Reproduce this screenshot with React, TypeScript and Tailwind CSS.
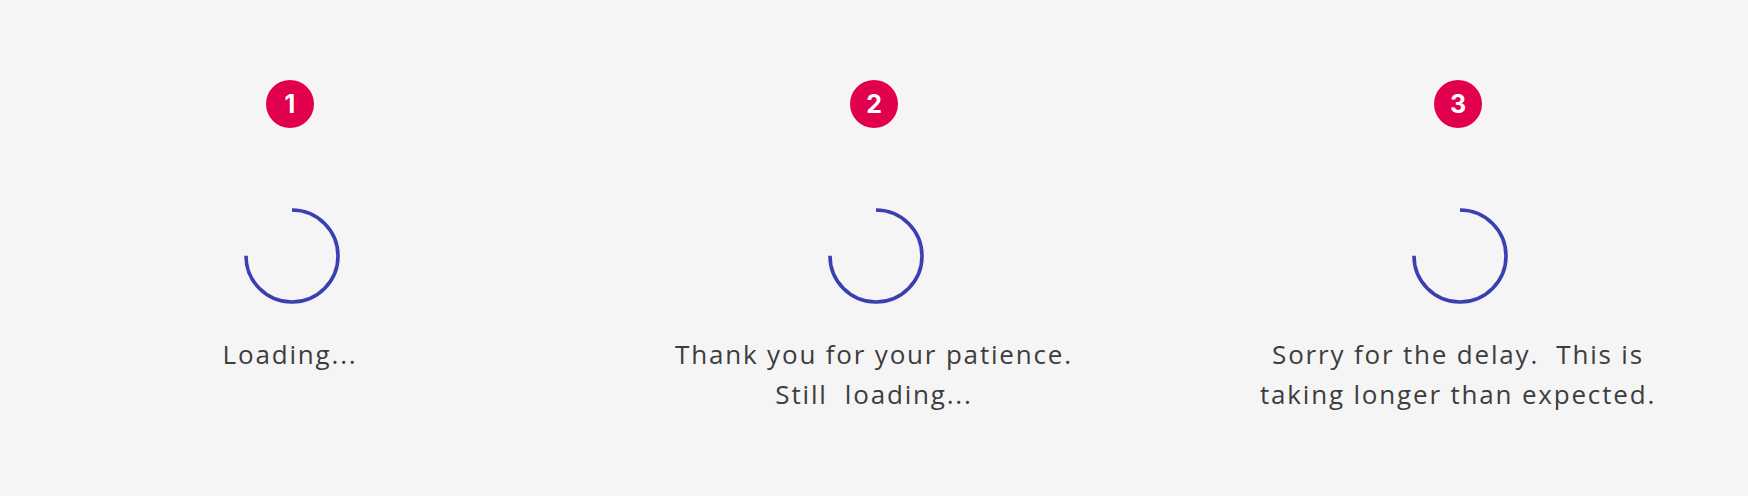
import React from 'react';

function Badge({ n }: { n: number }) {
  return (
    <div className="w-12 h-12 rounded-full bg-[#e0004d] flex items-center justify-center text-white text-[25px] font-bold font-['Inter',sans-serif] leading-none">
      {n}
    </div>
  );
}

function Spinner() {
  return (
    <svg width="100" height="100" viewBox="0 0 100 100" className="mt-[78px] ml-[4px]">
      <circle
        cx="50"
        cy="50"
        r="46"
        fill="none"
        stroke="#3a3fb2"
        strokeWidth="3.6"
        strokeDasharray="216.77 289.03"
        transform="rotate(-90 50 50)"
      />
    </svg>
  );
}

const steps = [
  { n: 1, lines: ['Loading...'] },
  { n: 2, lines: ['Thank you for your patience.', 'Still\u00a0 loading...'] },
  { n: 3, lines: ['Sorry for the delay.\u00a0 This is', 'taking longer than expected.'] },
];

export default function App() {
  return (
    <div className="w-[1748px] h-[496px] bg-[#f5f5f5] grid grid-cols-[580px_580px_580px] gap-x-[4px]">
      {steps.map((s) => (
        <div key={s.n} className="flex flex-col items-center pt-[80px]">
          <Badge n={s.n} />
          <Spinner />
          <div className="mt-[28px] text-center text-[26px] leading-[40px] tracking-[0.07em] text-[#3d3d3d] font-['Open_Sans',sans-serif]">
            {s.lines.map((l) => (
              <div key={l}>{l}</div>
            ))}
          </div>
        </div>
      ))}
    </div>
  );
}
